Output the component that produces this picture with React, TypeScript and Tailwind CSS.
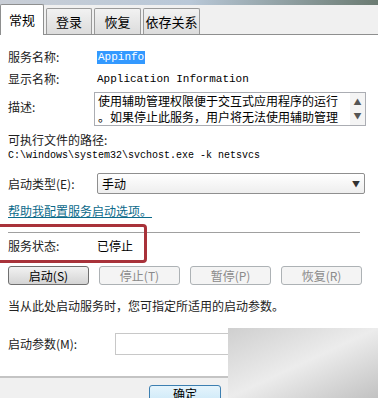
import React from "react";

const cjk = { fontFamily: '"Noto Sans CJK SC", "Noto Sans", sans-serif' };
const mono = { fontFamily: '"Liberation Mono", "Noto Sans CJK SC", monospace' };

const Tab = ({ label, w, active }: { label: string; w: string; active?: boolean }) => (
  <div
    className={
      active
        ? `${w} h-[31px] bg-white border border-b-0 border-[#8e8f8f] rounded-t-[2px] flex items-center justify-center text-[13px] text-black -mb-px z-10`
        : `${w} h-[26px] bg-gradient-to-b from-[#f2f2f2] to-[#dcdcdc] border border-b-0 border-[#9a9a9a] rounded-t-[2px] flex items-center justify-center text-[13px] text-black`
    }
  >
    {label}
  </div>
);

const Btn = ({ label, enabled }: { label: string; enabled?: boolean }) => (
  <div
    className={
      enabled
        ? "w-[81px] h-[19px] rounded-[3px] border border-[#707070] bg-gradient-to-b from-[#f2f2f2] to-[#d4d4d4] flex items-center justify-center text-[12px] text-black"
        : "w-[81px] h-[19px] rounded-[3px] border border-[#adb2b5] bg-[#f4f4f4] flex items-center justify-center text-[12px] text-[#8a8a8a]"
    }
  >
    {label}
  </div>
);

export default function App() {
  return (
    <div className="w-[378px] h-[398px] overflow-hidden relative bg-white" style={cjk}>
      <div className="h-[5px] bg-gradient-to-r from-[#c9ced6] via-[#b9c8d8] to-[#6b7b72]" />
      <div className="h-[30px] bg-[#f0f0f0] flex items-end gap-[2px] border-b border-[#8e8f8f]">
        <Tab label="常规" w="w-[44px]" active />
        <Tab label="登录" w="w-[46px]" />
        <Tab label="恢复" w="w-[47px]" />
        <Tab label="依存关系" w="w-[57px]" />
      </div>

      <div className="px-[8px] text-[12px] text-black">
        <div className="flex items-center h-[22px] mt-[11px]">
          <span className="w-[89px] text-[#222]">服务名称:</span>
          <span className="bg-[#3399ff] text-white px-[1px] text-[11px] leading-[13px]" style={mono}>Appinfo</span>
        </div>
        <div className="flex items-center h-[22px]">
          <span className="w-[89px] text-[#222]">显示名称:</span>
          <span className="text-[11px]" style={mono}>Application Information</span>
        </div>
        <div className="flex items-start mt-[2px]">
          <span className="w-[86px] mt-[6px] text-[#222]">描述:</span>
          <div className="w-[272px] h-[34px] border border-[#abadb3] flex">
            <div className="flex-1 pl-[3px] text-[12px] leading-[16px] overflow-hidden whitespace-nowrap">
              使用辅助管理权限便于交互式应用程序的运行
              <br />
              。如果停止此服务，用户将无法使用辅助管理
            </div>
            <div className="w-[15px] bg-[#f4f4f4] flex flex-col items-center justify-between py-[3px] text-[8px] text-[#555]">
              <span>▲</span>
              <span>▼</span>
            </div>
          </div>
        </div>
        <div className="mt-[6px] leading-[16px] text-[#222]">可执行文件的路径:</div>
        <div className="text-[10px] leading-[15px]" style={mono}>C:\windows\system32\svchost.exe -k netsvcs</div>
        <div className="flex items-center mt-[10px]">
          <span className="w-[89px] text-[#222]">启动类型(E):</span>
          <div className="w-[268px] h-[21px] border border-[#8f8f8f] rounded-[2px] bg-gradient-to-b from-white to-[#eeeeee] flex items-center justify-between px-[4px]">
            <span className="text-[12px]">手动</span>
            <span className="text-[8px] text-[#333]">▼</span>
          </div>
        </div>
        <div className="mt-[9px] text-[12px] text-[#0b6a8a] underline leading-[16px]">帮助我配置服务启动选项。</div>
        <div className="mt-[13px] h-px bg-[#a0a0a0] mr-[10px]" />
        <div className="flex items-center h-[24px] mt-[1px]">
          <span className="w-[89px] text-[#222]">服务状态:</span>
          <span>已停止</span>
        </div>
        <div className="flex gap-[10px] mt-[8px]">
          <Btn label="启动(S)" enabled />
          <Btn label="停止(T)" />
          <Btn label="暂停(P)" />
          <Btn label="恢复(R)" />
        </div>
        <div className="mt-[13px] leading-[16px] text-[#222]">当从此处启动服务时，您可指定所适用的启动参数。</div>
        <div className="flex items-center mt-[19px]">
          <span className="w-[107px] text-[#222]">启动参数(M):</span>
          <div className="w-[115px] h-[22px] border border-[#c8c8c8] bg-white" />
        </div>
      </div>

      <div className="absolute left-0 right-0 top-[376px] bottom-0 bg-[#f0f0f0] border-t-2 border-[#c4c4c4] flex">
        <div className="ml-[149px] mt-[7px] w-[72px] h-[24px] rounded-[3px] border border-[#3c7fb1] bg-gradient-to-b from-[#e5f4fc] to-[#c4e5f6] flex items-start justify-center text-[12px] leading-[14px] pt-[1px]">
          确定
        </div>
      </div>

      <div className="absolute left-[228px] top-[328px] w-[150px] h-[70px] bg-gradient-to-br from-[#cfcfcf] via-[#ececec] to-[#c2c2c2]" />

      <div className="absolute left-[-6px] top-[224px] w-[153px] h-[39px] border-[3px] border-[#a8323a] rounded-[4px]" />
    </div>
  );
}
